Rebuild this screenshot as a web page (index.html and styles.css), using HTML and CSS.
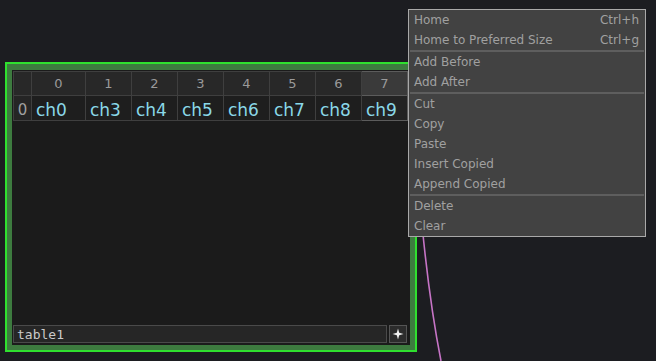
FILE: index.html
```html
<!DOCTYPE HTML>
<html lang="en">
<head>
	<title>table1</title>
	<meta charset="utf-8">
	<link rel="stylesheet" href="styles.css">
</head>
<body>
	<main class="canvas">
		<!-- wire leaving the node -->
		<svg class="wire" width="656" height="361" viewBox="0 0 656 361">
			<path d="M 419 190 Q 427 290 441 361" fill="none" stroke="#c674c6" stroke-width="1.6"/>
		</svg>

		<!-- table node -->
		<section class="node">
			<div class="panel">
				<table class="grid">
					<tr class="head">
						<td class="corner"></td>
						<td>0</td><td>1</td><td>2</td><td>3</td><td>4</td><td>5</td><td>6</td><td class="sel">7</td>
					</tr>
					<tr class="row">
						<td class="rowhead">0</td>
						<td>ch0</td><td>ch3</td><td>ch4</td><td>ch5</td><td>ch6</td><td>ch7</td><td>ch8</td><td class="sel">ch9</td>
					</tr>
				</table>
				<div class="footer">
					<div class="name">table1</div>
					<button class="add">
						<svg width="12" height="12" viewBox="0 0 12 12">
							<path d="M6 0.5 L7.2 4.8 L11.5 6 L7.2 7.2 L6 11.5 L4.8 7.2 L0.5 6 L4.8 4.8 Z" fill="#f2f2f2"/>
						</svg>
					</button>
				</div>
			</div>
		</section>

		<!-- right click menu -->
		<ul class="menu">
			<li><span>Home</span><span>Ctrl+h</span></li>
			<li><span>Home to Preferred Size</span><span>Ctrl+g</span></li>
			<li class="sep"></li>
			<li><span>Add Before</span></li>
			<li><span>Add After</span></li>
			<li class="sep"></li>
			<li><span>Cut</span></li>
			<li><span>Copy</span></li>
			<li><span>Paste</span></li>
			<li><span>Insert Copied</span></li>
			<li><span>Append Copied</span></li>
			<li class="sep"></li>
			<li><span>Delete</span></li>
			<li><span>Clear</span></li>
		</ul>
	</main>
</body>
</html>
```

FILE: styles.css
```css
html, body {
	margin: 0;
	padding: 0;
	background-color: #1c1d21;
}
.canvas {
	position: relative;
	width: 656px;
	height: 361px;
	overflow: hidden;
	font-family: "DejaVu Sans", Verdana, sans-serif;
}
.wire {
	position: absolute;
	left: 0;
	top: 0;
}

/* node */
.node {
	position: absolute;
	left: 5px;
	top: 62px;
	border: 2px solid #2fe02f;
	background-color: #3d7b3f;
	padding: 6px 5px 5px 5px;
	width: 398px;
	height: 275px;
}
.panel {
	width: 398px;
	height: 275px;
	background-color: #1b1b1b;
	display: flex;
	flex-direction: column;
	justify-content: space-between;
	box-sizing: border-box;
	padding: 1px 3px 2px 1px;
}
.grid {
	border-collapse: collapse;
	table-layout: fixed;
	width: 394px;
}
.grid td {
	border: 1px solid #3f3f3f;
	padding: 0;
	text-align: center;
	width: 45px;
}
.grid td.corner,
.grid td.rowhead {
	width: 17px;
}
.grid tr td:nth-child(2) {
	width: 53px;
}
.head td {
	height: 23px;
	background-color: #282828;
	color: #9a9a9a;
	font-size: 13px;
}
.row td {
	height: 21px;
	background-color: #1e1e1e;
	color: #8ad8e8;
	font-size: 17px;
	text-align: left;
	padding: 3px 0 0 4px;
}
.row td.rowhead {
	color: #a0a0a0;
	font-size: 15px;
	text-align: center;
	padding: 3px 0 0 0;
	background-color: #252525;
}
.grid td.sel {
	border: 1px solid #5c5c5c;
}
.head td.sel {
	background-color: #3a3a3a;
}
.row td.sel {
	background-color: #232323;
}

.footer {
	display: flex;
	gap: 2px;
	height: 18px;
}
.name {
	flex: 1;
	background-color: #262626;
	border: 1px solid #4a4a4a;
	color: #cacaca;
	font-family: "DejaVu Sans Mono", monospace;
	font-size: 13px;
	line-height: 17px;
	padding-left: 3px;
}
.add {
	width: 18px;
	height: 18px;
	padding: 0;
	margin: 0;
	background-color: #2c2c2c;
	border: 1px solid #555;
	display: flex;
	align-items: center;
	justify-content: center;
}

/* menu */
.menu {
	position: absolute;
	left: 408px;
	top: 9px;
	width: 236px;
	margin: 0;
	padding: 0;
	list-style: none;
	background-color: #424242;
	border: 1px solid #a9a9a9;
	color: #a0a0a0;
	font-size: 12px;
}
.menu li {
	height: 19px;
	line-height: 19px;
	padding: 1px 6px 0 5px;
	display: flex;
	justify-content: space-between;
}
.menu li.sep {
	height: 2px;
	margin: 0 1px;
	padding: 0;
	background-color: #5e5e5e;
}
```
